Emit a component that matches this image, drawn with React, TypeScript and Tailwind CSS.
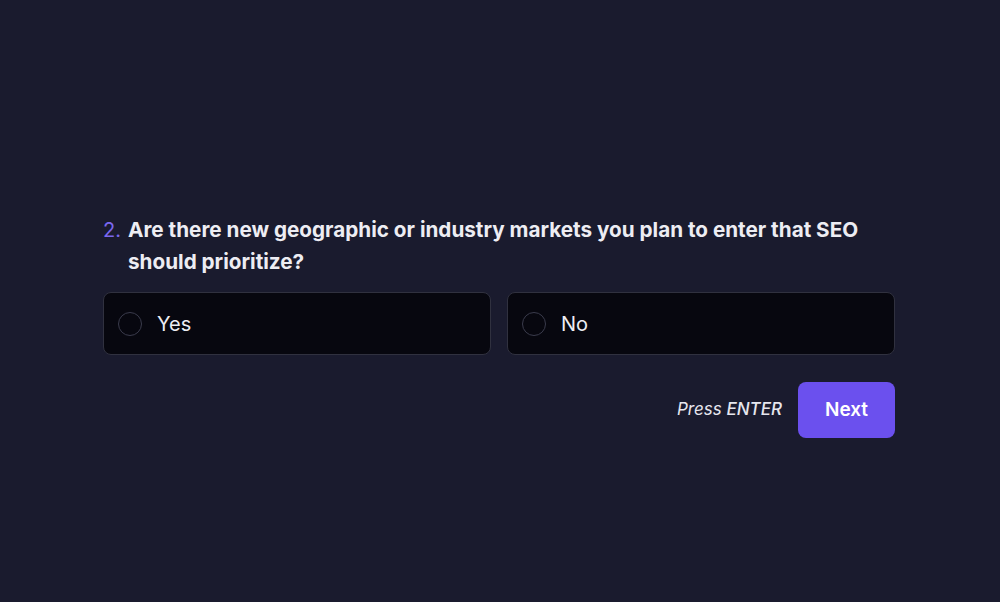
export default function App() {
  return (
    <div className="w-[1000px] h-[602px] bg-[#1a1b2e] overflow-hidden" style={{ fontFamily: "Inter, 'Noto Sans', sans-serif" }}>
      <div className="w-[792px] ml-[103px] pt-[214px]">
        <div className="flex text-[20.7px] leading-[32px] font-bold text-[#ededf3]">
          <span className="w-[25px] shrink-0 font-normal text-[20px] text-[#7b68ee]">2.</span>
          <span>Are there new geographic or industry markets you plan to enter that SEO should prioritize?</span>
        </div>
        <div className="grid grid-cols-2 gap-4 mt-[14px]">
          {["Yes", "No"].map((o) => (
            <div key={o} className="h-[63px] rounded-lg border border-[#30313f] bg-[#07070f] flex items-center pl-[14px]">
              <span className="w-[24px] h-[24px] rounded-full border border-[#3a3b4c]" />
              <span className="ml-[15px] text-[20px] text-[#ededf3]">{o}</span>
            </div>
          ))}
        </div>
        <div className="flex justify-end items-center mt-[27px] gap-4">
          <span className="italic text-[17px] text-[#e6e6ee]">
            Press <span className="font-medium">ENTER</span>
          </span>
          <button className="w-[97px] h-[56px] rounded-lg bg-[#6b50ee] text-white text-[19px] font-semibold">Next</button>
        </div>
      </div>
    </div>
  );
}
